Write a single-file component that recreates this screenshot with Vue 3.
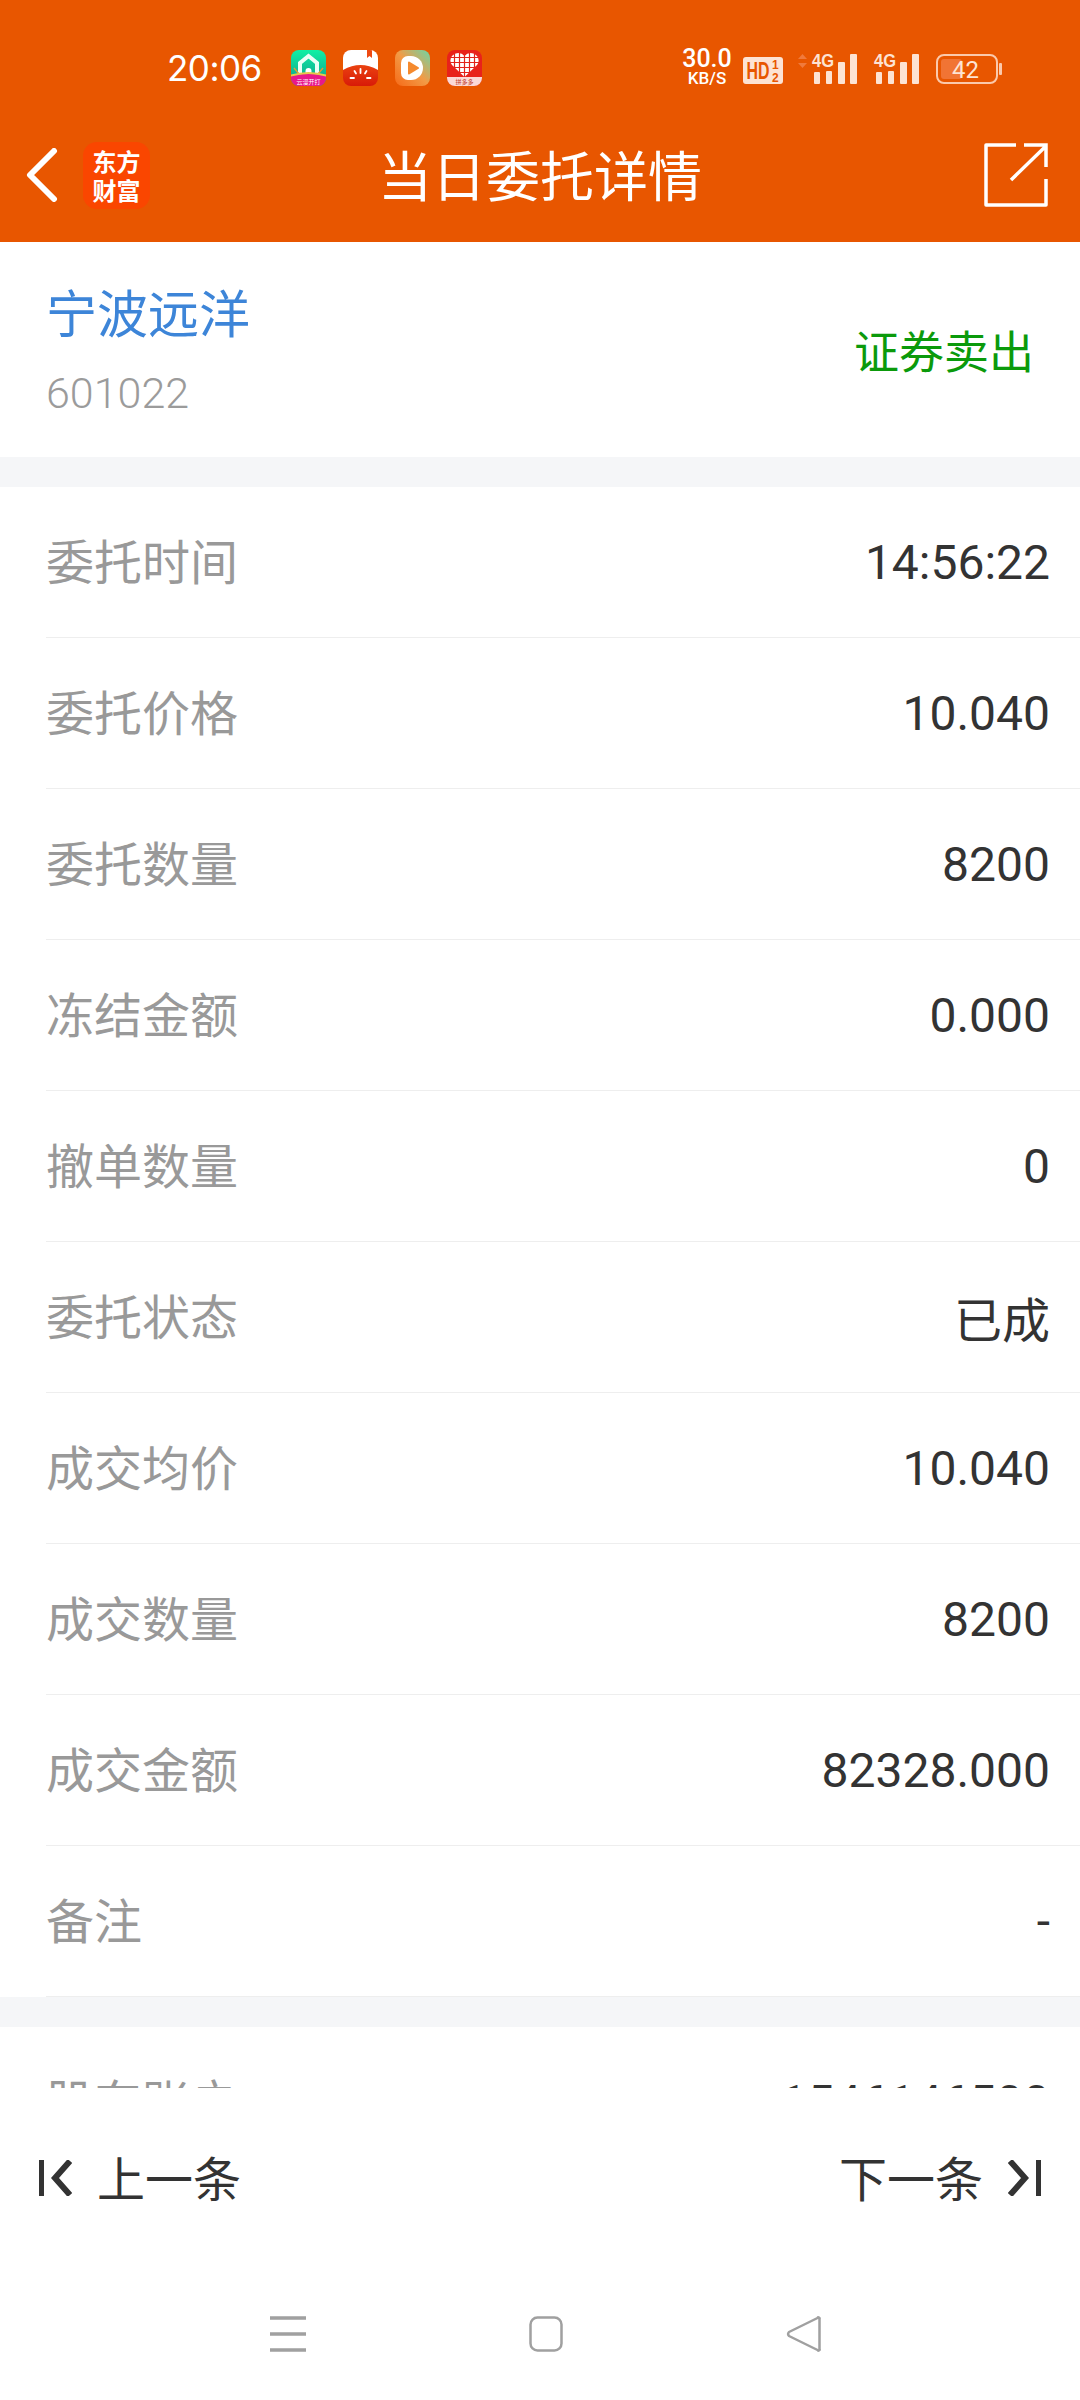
<template>
  <div class="phone">
    <header class="top">
      <div class="status">
        <span class="time">20:06</span>
        <div class="apps">
          <svg class="app" viewBox="0 0 35 36">
            <defs>
              <linearGradient id="g1" x1="0" y1="0" x2="0" y2="1">
                <stop offset="0" stop-color="#0ff0a4" />
                <stop offset="0.7" stop-color="#0fb391" />
              </linearGradient>
              <clipPath id="c1"><rect width="35" height="36" rx="8" /></clipPath>
            </defs>
            <g clip-path="url(#c1)">
              <rect width="35" height="36" fill="url(#g1)" />
              <path d="M9 27V13L17.5 6L26 13V27" fill="none" stroke="#eafff6" stroke-width="4" />
              <path d="M14.5 27v-6a3 3 0 0 1 6 0v6z" fill="#fff" />
              <path d="M3 18l5 6M32 18l-5 6" stroke="#d9a03a" stroke-width="1.500" />
              <path d="M0 26Q17.500 21 35 26V36H0z" fill="#e8188a" />
              <path d="M0 24.500Q17.500 19.500 35 24.500V26.500Q17.500 21.500 0 26.500z" fill="#e8c84a" />
              <text x="17.5" y="33.500" class="tiny">云漫开打</text>
            </g>
          </svg>
          <svg class="app" viewBox="0 0 35 36">
            <defs>
              <linearGradient id="g2" x1="0" y1="0" x2="0" y2="1">
                <stop offset="0.3" stop-color="#ee4a12" />
                <stop offset="1" stop-color="#d81a08" />
              </linearGradient>
              <clipPath id="c2"><rect width="35" height="36" rx="8" /></clipPath>
            </defs>
            <g clip-path="url(#c2)">
              <rect width="35" height="36" fill="url(#g2)" />
              <path d="M0 0H35V20Q17.500 10 0 20z" fill="#fff" />
              <path d="M24 0h5v8l-2.500-2-2.500 2z" fill="#ee4a12" />
              <path d="M17.500 19v4M11.500 21l1.500 2.500M23.500 21l-1.500 2.500M7.500 28h3.500M24 28h3.500" stroke="#fff" stroke-width="1.800" stroke-linecap="round" />
            </g>
          </svg>
          <svg class="app" viewBox="0 0 35 36">
            <defs>
              <linearGradient id="g3" x1="0" y1="1" x2="1" y2="0">
                <stop offset="0" stop-color="#f66a18" />
                <stop offset="0.5" stop-color="#f39a45" />
                <stop offset="1" stop-color="#6dd6a6" />
              </linearGradient>
            </defs>
            <rect width="35" height="36" rx="8" fill="url(#g3)" />
            <path d="M13 6h3a12 12 0 0 1 0 24h-3a7 7 0 0 1-7-7V13a7 7 0 0 1 7-7z" fill="#fff" />
            <path d="M14 12.500l9 5.500-9 5.500z" fill="#f58a2e" stroke="#f58a2e" stroke-width="2" stroke-linejoin="round" />
          </svg>
          <svg class="app" viewBox="0 0 35 36">
            <defs>
              <clipPath id="c4"><rect width="35" height="36" rx="8" /></clipPath>
              <pattern id="p4" width="5" height="5" patternUnits="userSpaceOnUse">
                <rect width="5" height="5" fill="#fff" />
                <path d="M2.500 0v5M0 2.500h5" stroke="#e2231a" stroke-width="1.200" />
              </pattern>
            </defs>
            <g clip-path="url(#c4)">
              <rect width="35" height="36" fill="#e8221b" />
              <path d="M17.500 27L5 15a7.500 7.500 0 0 1 0-9a8 8 0 0 1 12.500 0a8 8 0 0 1 12.500 0a7.500 7.500 0 0 1 0 9z" fill="url(#p4)" />
              <rect y="27" width="35" height="9" fill="#fbd9d6" />
              <text x="17.500" y="34" class="tiny dark">拼多多</text>
            </g>
          </svg>
        </div>
        <div class="indicators">
          <div class="speed">
            <span class="speed-num">30.0</span>
            <span class="speed-unit">KB/S</span>
          </div>
          <svg class="hd" viewBox="0 0 40 27">
            <rect width="40" height="27" rx="3" fill="#fde3d3" />
            <text x="3.500" y="22" class="hd-text" textLength="23" lengthAdjust="spacingAndGlyphs">HD</text>
            <text x="29" y="12" class="hd-num">1</text>
            <text x="29" y="25" class="hd-num">2</text>
          </svg>
          <svg class="updown" viewBox="0 0 9 14">
            <path d="M4.500 0L9 5H0z" fill="#f07a3c" />
            <path d="M4.500 14L0 9H9z" fill="#f07a3c" />
          </svg>
          <svg class="signal" viewBox="0 0 46 31">
            <text x="0" y="14" class="sig-text" textLength="22" lengthAdjust="spacingAndGlyphs">4G</text>
            <rect x="2" y="19" width="6" height="12" rx="1" fill="#fde3d3" />
            <rect x="14" y="18" width="6" height="13" rx="1" fill="#fde3d3" />
            <rect x="26" y="9" width="7" height="22" rx="1" fill="#fde3d3" />
            <rect x="38" y="1" width="7" height="30" rx="1" fill="#fde3d3" />
          </svg>
          <svg class="signal" viewBox="0 0 46 31">
            <text x="0" y="14" class="sig-text" textLength="22" lengthAdjust="spacingAndGlyphs">4G</text>
            <rect x="2" y="19" width="6" height="12" rx="1" fill="#fde3d3" />
            <rect x="14" y="18" width="6" height="13" rx="1" fill="#fde3d3" />
            <rect x="26" y="9" width="7" height="22" rx="1" fill="#fde3d3" />
            <rect x="38" y="1" width="7" height="30" rx="1" fill="#fde3d3" />
          </svg>
          <svg class="battery" viewBox="0 0 66 30">
            <rect x="1" y="1" width="60" height="28" rx="7" fill="none" stroke="#fbc9ab" stroke-width="2" />
            <rect x="5" y="5" width="21" height="20" rx="3" fill="#f17434" />
            <rect x="63" y="9" width="3" height="12" rx="1" fill="#fbc9ab" />
            <text x="16" y="23.500" class="bat-text">42</text>
          </svg>
        </div>
      </div>
      <div class="nav">
        <div class="nav-left">
          <svg class="back" viewBox="0 0 32 54">
            <path d="M28 3L4 27L28 51" fill="none" stroke="#fff" stroke-width="6" stroke-linecap="round" stroke-linejoin="round" />
          </svg>
          <div class="logo">东方<br />财富</div>
        </div>
        <h1 class="title">当日委托详情</h1>
        <div class="nav-right">
          <svg class="share" viewBox="0 0 64 64">
            <path d="M32 2H2V62H62V36" fill="none" stroke="#fff" stroke-width="3.500" stroke-linejoin="round" />
            <path d="M27 37L62 3M40 2H62V24" fill="none" stroke="#fff" stroke-width="3.500" />
          </svg>
        </div>
      </div>
    </header>

    <main class="content">
      <section class="stock">
        <div>
          <div class="stock-name">宁波远洋</div>
          <div class="stock-code">601022</div>
        </div>
        <div class="stock-side">证券卖出</div>
      </section>
      <div class="gap"></div>
      <section>
        <div class="row" v-for="item in details" :key="item.label">
          <span class="label">{{ item.label }}</span>
          <span class="value">{{ item.value }}</span>
        </div>
      </section>
      <div class="gap"></div>
      <section>
        <div class="row">
          <span class="label">股东账户</span>
          <span class="value">1546146500</span>
        </div>
      </section>
    </main>

    <footer class="bottom">
      <div class="pager">
        <div class="pager-btn">
          <svg class="pager-icon" viewBox="0 0 34 36">
            <path d="M3.500 0V36" stroke="#333" stroke-width="5" fill="none" />
            <path d="M32 1L17 18L32 35" stroke="#333" stroke-width="6" fill="none" />
          </svg>
          <span class="pager-text">上一条</span>
        </div>
        <div class="pager-btn">
          <span class="pager-text">下一条</span>
          <svg class="pager-icon" viewBox="0 0 34 36">
            <path d="M30.500 0V36" stroke="#333" stroke-width="5" fill="none" />
            <path d="M2 1L17 18L2 35" stroke="#333" stroke-width="6" fill="none" />
          </svg>
        </div>
      </div>
      <div class="sysnav">
        <svg class="sys-icon" viewBox="0 0 36 36">
          <path d="M0 2H36M0 18H36M0 34H36" stroke="#a0a0a0" stroke-width="3.500" />
        </svg>
        <svg class="sys-icon" viewBox="0 0 36 36">
          <rect x="2.500" y="1.500" width="31" height="33" rx="7" fill="none" stroke="#a0a0a0" stroke-width="2.500" />
        </svg>
        <svg class="sys-icon" viewBox="0 0 36 36">
          <path d="M33.500 3V33a1 1 0 0 1-2 1L3 20a3 3 0 0 1 0-4L31.500 2a1 1 0 0 1 2 1z" fill="none" stroke="#a0a0a0" stroke-width="2.500" stroke-linejoin="round" />
        </svg>
      </div>
    </footer>
  </div>
</template>

<script setup>
const details = [
  { label: '委托时间', value: '14:56:22' },
  { label: '委托价格', value: '10.040' },
  { label: '委托数量', value: '8200' },
  { label: '冻结金额', value: '0.000' },
  { label: '撤单数量', value: '0' },
  { label: '委托状态', value: '已成' },
  { label: '成交均价', value: '10.040' },
  { label: '成交数量', value: '8200' },
  { label: '成交金额', value: '82328.000' },
  { label: '备注', value: '-' }
]
</script>

<style>
html,
body {
  margin: 0;
  background: #fff;
}
</style>

<style scoped>
.phone {
  width: 1080px;
  height: 2400px;
  display: flex;
  flex-direction: column;
  overflow: hidden;
  background: #fff;
  font-family: Roboto, "Noto Sans CJK SC", sans-serif;
}

.top {
  height: 242px;
  flex: none;
  background: #e85600;
  color: #fff;
}

.status {
  height: 80px;
  padding-top: 28px;
  display: flex;
  align-items: center;
}

.time {
  margin-left: 167px;
  width: 124px;
  font-size: 35px;
  line-height: 40px;
  font-family: Inter, sans-serif;
  letter-spacing: -0.5px;
}

.apps {
  display: flex;
  gap: 17px;
}

.app {
  width: 35px;
  height: 36px;
}

.tiny {
  font-size: 6px;
  font-family: "Noto Sans CJK SC", sans-serif;
  text-anchor: middle;
  fill: #fff;
}

.tiny.dark {
  fill: #c0392b;
}

.indicators {
  margin-left: 195px;
  display: flex;
  align-items: flex-end;
  height: 36px;
}

.speed {
  width: 60px;
  display: flex;
  flex-direction: column;
  align-items: center;
  font-family: Roboto, sans-serif;
  font-weight: 500;
  color: #fff;
}

.speed-num {
  font-size: 25px;
  line-height: 22px;
}

.speed-unit {
  font-size: 17px;
  line-height: 16px;
}

.hd {
  width: 40px;
  height: 27px;
  margin: 0 0 2px 6px;
}

.hd-text {
  font-family: "Liberation Sans", sans-serif;
  font-size: 23px;
  font-weight: 700;
  fill: #e85600;
}

.hd-num {
  font-family: "Liberation Sans", sans-serif;
  font-size: 12px;
  font-weight: 700;
  fill: #e85600;
}

.updown {
  width: 9px;
  height: 14px;
  margin: 0 5px 18px 15px;
}

.signal {
  width: 46px;
  height: 31px;
  margin-right: 16px;
  margin-bottom: 2px;
  overflow: visible;
}

.sig-text {
  font-family: "Liberation Sans", sans-serif;
  font-size: 19px;
  font-weight: 700;
  fill: #fde3d3;
}

.battery {
  width: 66px;
  height: 30px;
  margin-bottom: 2px;
}

.bat-text {
  font-family: Roboto, sans-serif;
  font-size: 24px;
  fill: #fde3d3;
}

.nav {
  height: 134px;
  display: grid;
  grid-template-columns: 1fr auto 1fr;
  align-items: center;
}

.nav-left {
  display: flex;
  align-items: center;
  padding-left: 26px;
  gap: 25px;
}

.back {
  width: 32px;
  height: 54px;
}

.logo {
  width: 67px;
  height: 67px;
  border-radius: 14px;
  background: #fa4600;
  color: #fff;
  font-family: "Noto Sans CJK SC", sans-serif;
  font-size: 24px;
  font-weight: 700;
  line-height: 29px;
  text-align: center;
  padding-top: 4px;
  box-sizing: border-box;
}

.title {
  margin: 0 0 2px;
  font-family: "Noto Sans CJK SC", sans-serif;
  font-size: 54px;
  font-weight: 400;
  line-height: 60px;
}

.nav-right {
  display: flex;
  justify-content: flex-end;
  padding-right: 32px;
}

.share {
  width: 64px;
  height: 64px;
}

.content {
  flex: 1;
  min-height: 0;
  overflow: hidden;
}

.stock {
  height: 215px;
  box-sizing: border-box;
  padding: 0 46px;
  display: flex;
  justify-content: space-between;
  align-items: center;
}

.stock-name {
  font-family: "Noto Sans CJK SC", sans-serif;
  font-size: 51px;
  line-height: 60px;
  color: #3d85d8;
}

.stock-code {
  margin-top: 27px;
  font-size: 43px;
  line-height: 50px;
  font-weight: 300;
  color: #9b9b9b;
}

.stock-side {
  font-family: "Noto Sans CJK SC", sans-serif;
  font-size: 45px;
  line-height: 50px;
  color: #0b9a0b;
}

.gap {
  height: 30px;
  background: #f5f6f8;
}

.row {
  height: 151px;
  box-sizing: border-box;
  margin-left: 46px;
  padding-right: 30px;
  display: flex;
  justify-content: space-between;
  align-items: center;
  border-bottom: 1px solid #eeeeee;
}

.label {
  margin-bottom: 6px;
  font-family: "Noto Sans CJK SC", sans-serif;
  font-size: 48px;
  color: #999;
}

.value {
  font-size: 48px;
  color: #333;
}

.bottom {
  height: 312px;
  flex: none;
  background: #fff;
}

.pager {
  height: 180px;
  box-sizing: border-box;
  padding: 0 38px;
  display: flex;
  justify-content: space-between;
  align-items: center;
}

.pager-btn {
  display: flex;
  align-items: center;
  gap: 25px;
  font-family: "Noto Sans CJK SC", sans-serif;
  font-size: 48px;
  color: #333;
}

.pager-text {
  margin-bottom: 5px;
}

.pager-icon {
  width: 34px;
  height: 36px;
}

.sysnav {
  padding: 48px 0 0 12px;
  display: flex;
  justify-content: center;
  gap: 222px;
}

.sys-icon {
  width: 36px;
  height: 36px;
}
</style>
